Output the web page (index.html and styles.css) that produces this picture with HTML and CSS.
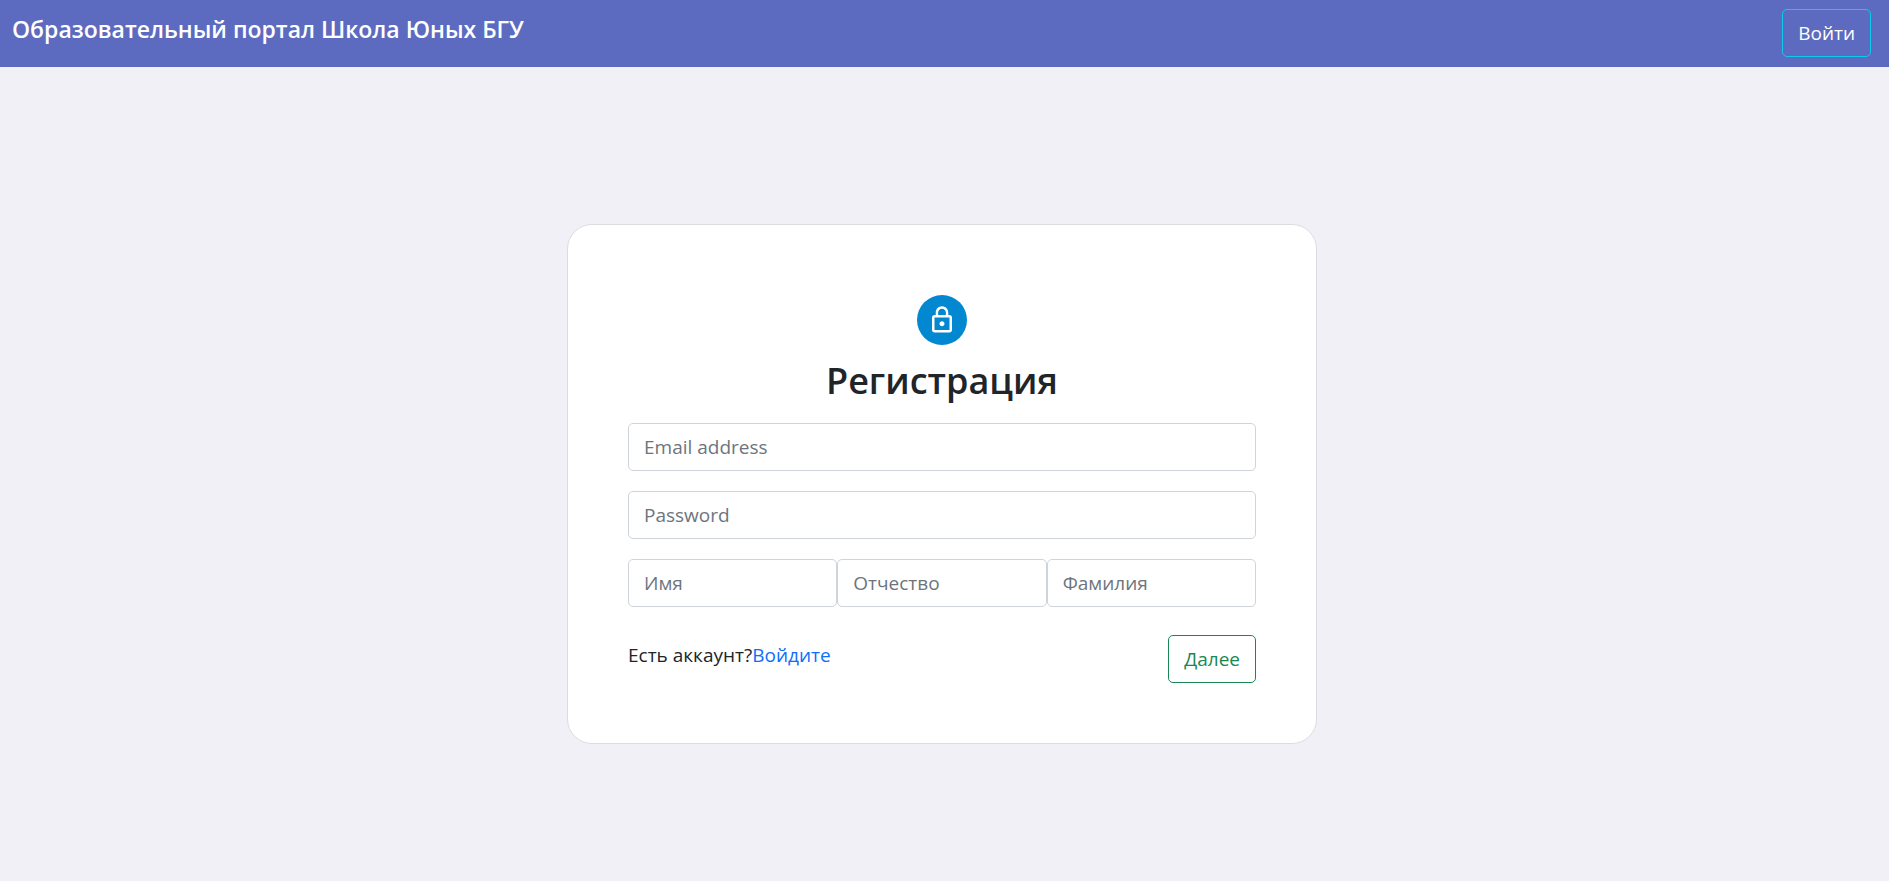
FILE: index.html
```
<!DOCTYPE html>
<html lang="ru">
<head>
<meta charset="utf-8">
<meta name="viewport" content="width=device-width, initial-scale=1">
<title>Регистрация</title>
<link rel="stylesheet" href="styles.css">
</head>
<body>
<header class="navbar">
  <a class="brand" href="#">Образовательный портал Школа Юных БГУ</a>
  <button class="btn btn-info" type="button">Войти</button>
</header>
<main class="page">
  <section class="card">
    <div class="avatar">
      <svg class="lock" viewBox="0 0 24 24" aria-hidden="true"><path fill="currentColor" d="M12 17c1.100 0 2-.9 2-2s-.9-2-2-2-2 .9-2 2 .9 2 2 2zm6-9h-1V6c0-2.760-2.240-5-5-5S7 3.240 7 6v2H6c-1.100 0-2 .9-2 2v10c0 1.100.9 2 2 2h12c1.100 0 2-.9 2-2V10c0-1.100-.9-2-2-2zM8.900 6c0-1.710 1.390-3.100 3.100-3.100s3.100 1.390 3.100 3.100v2H8.900V6zM18 20H6V10h12v10z"/></svg>
    </div>
    <h1 class="title">Регистрация</h1>
    <form class="form">
      <input class="field" type="email" placeholder="Email address" aria-label="Email address">
      <input class="field" type="password" placeholder="Password" aria-label="Password">
      <div class="names">
        <input class="field" type="text" placeholder="Имя" aria-label="Имя">
        <input class="field" type="text" placeholder="Отчество" aria-label="Отчество">
        <input class="field" type="text" placeholder="Фамилия" aria-label="Фамилия">
      </div>
      <div class="actions">
        <p class="hint">Есть аккаунт?<a class="link" href="#">Войдите</a></p>
        <button class="btn btn-success" type="submit">Далее</button>
      </div>
    </form>
  </section>
</main>
</body>
</html>
```
FILE: styles.css
```
* {
  box-sizing: border-box;
}

body {
  display: flex;
  flex-direction: column;
  min-height: 100vh;
  margin: 0;
  background: #f0f0f6;
  color: #212529;
  font-family: "Open Sans", "Noto Sans", sans-serif;
  font-size: 19px;
  line-height: 30px;
}

.navbar {
  display: flex;
  align-items: flex-start;
  justify-content: space-between;
  padding: 9px 18px 10px 12px;
  background: #5c6bc0;
}

.brand {
  padding-top: 5px;
  color: #fff;
  font-size: 23px;
  font-weight: 600;
  text-decoration: none;
}

.btn {
  padding: 8px 15px;
  border: 1px solid;
  border-radius: 5px;
  background: transparent;
  font: inherit;
  cursor: pointer;
}

.btn-info {
  border-color: #0dcaf0;
  color: #fff;
}

.btn-success {
  border-color: #198754;
  color: #198754;
}

.page {
  display: flex;
  flex: 1;
  align-items: center;
  justify-content: center;
  padding: 20px 5px 0 0;
}

.card {
  width: 100%;
  max-width: 750px;
  padding: 70px 60px 60px;
  border: 1px solid #dcdde0;
  border-radius: 25px;
  background: #fff;
}

.avatar {
  display: flex;
  align-items: center;
  justify-content: center;
  width: 50px;
  height: 50px;
  margin: 0 auto;
  border-radius: 50%;
  background: #0288d1;
  color: #fff;
}

.lock {
  width: 30px;
  height: 30px;
}

.title {
  margin: 12px 0 18px;
  font-size: 36px;
  font-weight: 600;
  line-height: 48px;
  text-align: center;
}

.form {
  display: flex;
  flex-direction: column;
  gap: 20px;
}

.field {
  width: 100%;
  min-width: 0;
  padding: 8px 15px;
  border: 1px solid #ced4da;
  border-radius: 5px;
  background: #fff;
  color: #212529;
  font: inherit;
}

.field::placeholder {
  color: #6c757d;
  opacity: 1;
}

.names {
  display: flex;
}

.actions {
  display: flex;
  align-items: flex-start;
  justify-content: space-between;
  padding-top: 8px;
}

.hint {
  margin: 5px 0 0;
}

.link {
  color: #0d6efd;
  text-decoration: none;
}
```
